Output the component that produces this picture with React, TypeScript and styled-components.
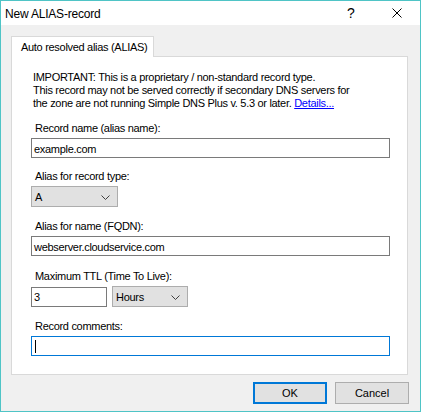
import React from 'react';
import styled, { createGlobalStyle } from 'styled-components';

const GlobalStyle = createGlobalStyle`
  html, body {
    margin: 0;
    padding: 0;
    background: #ffffff;
  }
  * {
    box-sizing: border-box;
  }
`;

const Window = styled.div`
  width: 421px;
  height: 412px;
  border: 1px solid #4fc4c6;
  background: #f0f0f0;
  display: flex;
  flex-direction: column;
  font-family: 'Liberation Sans', Arial, sans-serif;
  font-size: 11px;
  letter-spacing: -0.3px;
  color: #000000;
`;

const TitleBar = styled.div`
  height: 24px;
  background: #ffffff;
  display: flex;
  align-items: center;
  padding-left: 4px;
`;

const Title = styled.div`
  flex: 1;
  font-size: 12px;
  letter-spacing: -0.2px;
  padding-top: 2px;
`;

const TitleButton = styled.div`
  width: 46px;
  height: 24px;
  display: flex;
  align-items: center;
  justify-content: center;
  font-size: 14px;
  letter-spacing: 0;
`;

const Body = styled.div`
  flex: 1;
  display: flex;
  flex-direction: column;
  padding: 11px 12px 0 10px;
`;

const TabStrip = styled.div`
  display: flex;
`;

const Tab = styled.div`
  width: 143px;
  height: 21px;
  margin-bottom: -1px;
  position: relative;
  z-index: 1;
  background: #ffffff;
  border: 1px solid #d9d9d9;
  border-bottom: none;
  padding: 4px 0 0 9px;
  line-height: 13px;
  white-space: nowrap;
`;

const Panel = styled.div`
  height: 319px;
  background: #ffffff;
  border: 1px solid #d9d9d9;
  padding: 14px 17px 0 19px;
  display: flex;
  flex-direction: column;
`;

const Notice = styled.p`
  margin: 0 0 12px 2px;
  line-height: 13px;
`;

const Link = styled.a`
  color: #0000ff;
  text-decoration: underline;
  cursor: pointer;
`;

const Field = styled.div<{ $gap?: number }>`
  display: flex;
  flex-direction: column;
  margin-bottom: ${(p) => p.$gap ?? 13}px;
`;

const Label = styled.label`
  display: block;
  line-height: 13px;
  margin: 0 0 3px 4px;
`;

const TextBox = styled.div<{ $width?: number; $focused?: boolean }>`
  width: ${(p) => (p.$width ? `${p.$width}px` : '100%')};
  height: 20px;
  border: 1px solid ${(p) => (p.$focused ? '#0078d7' : '#7a7a7a')};
  background: #ffffff;
  padding: 1px 0 0 2px;
  line-height: 14px;
  display: flex;
  align-items: center;
`;

const Caret = styled.span`
  width: 1px;
  height: 13px;
  background: #000000;
  margin-left: 1px;
`;

const Combo = styled.div<{ $width: number }>`
  width: ${(p) => p.$width}px;
  height: 21px;
  border: 1px solid #adadad;
  background: #e1e1e1;
  display: flex;
  align-items: center;
  justify-content: space-between;
  padding: 1px 7px 0 3px;
`;

const Row = styled.div`
  display: flex;
  align-items: center;
  gap: 5px;
`;

const Footer = styled.div`
  display: flex;
  justify-content: flex-end;
  gap: 8px;
  padding: 7px 0 0 0;
  margin-right: -1px;
`;

const Button = styled.div<{ $default?: boolean }>`
  width: 74px;
  height: 22px;
  background: #e1e1e1;
  border: ${(p) => (p.$default ? '2px solid #0078d7' : '1px solid #adadad')};
  display: flex;
  align-items: center;
  justify-content: center;
  font-size: 11px;
  letter-spacing: 0;
`;

const Chevron = () => (
  <svg width="9" height="5" viewBox="0 0 9 5">
    <polyline points="0.5,0.5 4.5,4.5 8.5,0.5" fill="none" stroke="#404040" strokeWidth="1" />
  </svg>
);

const CloseIcon = () => (
  <svg width="10" height="10" viewBox="0 0 10 10">
    <path d="M0.5 0.5 L9.5 9.5 M9.5 0.5 L0.5 9.5" stroke="#000000" strokeWidth="1" />
  </svg>
);

const App = () => {
  return (
    <>
      <GlobalStyle />
      <Window>
        <TitleBar>
          <Title>New ALIAS-record</Title>
          <TitleButton>?</TitleButton>
          <TitleButton>
            <CloseIcon />
          </TitleButton>
        </TitleBar>
        <Body>
          <TabStrip>
            <Tab>Auto resolved alias (ALIAS)</Tab>
          </TabStrip>
          <Panel>
            <Notice>
              IMPORTANT: This is a proprietary / non-standard record type.
              <br />
              This record may not be served correctly if secondary DNS servers for
              <br />
              the zone are not running Simple DNS Plus v. 5.3 or later. <Link>Details...</Link>
            </Notice>
            <Field $gap={12}>
              <Label>Record name (alias name):</Label>
              <TextBox>example.com</TextBox>
            </Field>
            <Field $gap={13}>
              <Label>Alias for record type:</Label>
              <Combo $width={87}>
                <span>A</span>
                <Chevron />
              </Combo>
            </Field>
            <Field $gap={14}>
              <Label>Alias for name (FQDN):</Label>
              <TextBox>webserver.cloudservice.com</TextBox>
            </Field>
            <Field $gap={13}>
              <Label>Maximum TTL (Time To Live):</Label>
              <Row>
                <TextBox $width={76}>3</TextBox>
                <Combo $width={76}>
                  <span>Hours</span>
                  <Chevron />
                </Combo>
              </Row>
            </Field>
            <Field>
              <Label>Record comments:</Label>
              <TextBox $focused>
                <Caret />
              </TextBox>
            </Field>
          </Panel>
          <Footer>
            <Button $default>OK</Button>
            <Button>Cancel</Button>
          </Footer>
        </Body>
      </Window>
    </>
  );
};

export default App;
